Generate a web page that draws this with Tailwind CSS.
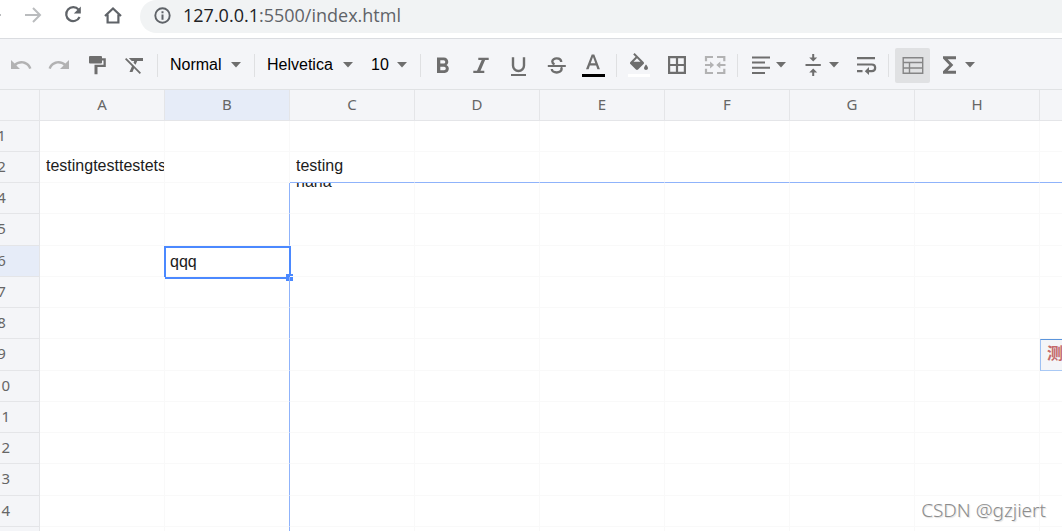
<!DOCTYPE html>
<html lang="en">
<head>
<meta charset="utf-8">
<title>Spreadsheet</title>
<script src="https://cdn.jsdelivr.net/npm/@tailwindcss/browser@4"></script>
</head>
<body class="relative flex h-screen flex-col overflow-hidden bg-white font-['Liberation_Sans',sans-serif] text-base text-black">

<header class="flex h-[39px] shrink-0 items-start border-b border-[#dadce0] bg-white text-[#5f6368]">
  <button aria-label="Back" class="h-8 w-[13px] shrink-0"><svg class="h-8 w-[13px]" viewBox="0 0 13 32"><path d="M-14 15H1" stroke="#babcbe" stroke-width="2"/></svg></button>
  <button aria-label="Forward" class="flex h-[30px] w-[39px] shrink-0 items-center justify-center"><svg class="h-5 w-5" viewBox="0 0 20 20" fill="none" stroke="#babcbe" stroke-width="2"><path d="M2 10h15M10 3l7 7-7 7"/></svg></button>
  <button aria-label="Reload" class="flex h-[30px] w-[41px] shrink-0 items-center justify-center"><svg class="h-5 w-5" viewBox="0 0 20 20"><path d="M15.600 4.600A7 7 0 1 0 16.600 12" fill="none" stroke="currentColor" stroke-width="2.200"/><path d="M17.800 1.500v7h-7z" fill="currentColor"/></svg></button>
  <button aria-label="Home" class="flex h-[30px] w-10 shrink-0 items-center justify-center"><svg class="h-5 w-5" viewBox="0 0 20 20" fill="none" stroke="currentColor" stroke-width="2.200"><path d="M2 11l8-7.600L18 11M4.600 9.500v8h10.800v-8"/></svg></button>
  <label class="ml-[7px] flex h-[33px] min-w-0 flex-1 items-center rounded-bl-full rounded-tl-full bg-[#f1f3f4] pl-[14px] font-['Open_Sans','Noto_Sans',sans-serif] text-[18px] leading-6">
    <svg class="mb-[2px] mr-3 h-[17px] w-[17px] shrink-0" viewBox="0 0 17 17"><circle cx="8.500" cy="8.500" r="7.200" fill="none" stroke="currentColor" stroke-width="1.900"/><path d="M7.500 4.200h2v2h-2zM7.500 7.500h2v5.200h-2z" fill="currentColor"/></svg>
    <a href="#" class="mb-[4px] whitespace-nowrap"><span class="text-[#202124]">127.0.0.1</span>:5500/index.html</a>
  </label>
</header>

<div role="toolbar" aria-label="Formatting" class="flex h-[51px] shrink-0 items-center border-b border-[#e0e2e4] bg-[#f4f5f8] pl-[2px] pt-[2px] text-[#6e6e6e]">
  <button aria-label="Undo" class="flex h-9 w-[38px] shrink-0 items-center justify-center text-[#b2b2b3]"><svg class="h-6 w-6" viewBox="0 0 24 24" fill="currentColor"><path d="M12.500 8c-2.650 0-5.050.99-6.900 2.600L2 7v9h9l-3.620-3.620c1.390-1.160 3.160-1.880 5.120-1.880 3.540 0 6.550 2.310 7.600 5.500l2.370-.78C21.080 11.030 17.150 8 12.500 8z"/></svg></button>
  <button aria-label="Redo" class="flex h-9 w-[38px] shrink-0 items-center justify-center text-[#b2b2b3]"><svg class="h-6 w-6" viewBox="0 0 24 24" fill="currentColor"><path d="M18.400 10.600C16.550 8.990 14.150 8 11.500 8c-4.650 0-8.580 3.030-9.960 7.220L3.900 16c1.050-3.190 4.050-5.500 7.600-5.500 1.950 0 3.730.72 5.120 1.880L13 16h9V7l-3.600 3.600z"/></svg></button>
  <button aria-label="Paint format" class="flex h-9 w-[38px] shrink-0 items-center justify-center"><svg class="h-6 w-6" viewBox="0 0 24 24" fill="currentColor"><path d="M5 3h11a1 1 0 0 1 1 1v1.300h3.800V14h-8.300v7.200h-3v-9.400h9V7.500H17v2a1 1 0 0 1-1 1H5a1 1 0 0 1-1-1V4a1 1 0 0 1 1-1z"/></svg></button>
  <button aria-label="Clear format" class="flex h-9 w-[38px] shrink-0 items-center justify-center"><svg class="h-6 w-6" viewBox="0 0 24 24" fill="currentColor"><path d="M3.270 5L2 6.270l6.970 6.970L6.500 19h3l1.570-3.660L16.730 21 18 19.730 3.550 5.270 3.270 5zM6 5v.18L8.820 8h2.400l-.72 1.680 2.100 2.100L14.210 8H20V5H6z"/></svg></button>
  <div class="mx-[3px] h-[23px] w-px shrink-0 bg-[#dfe0e2]"></div>
  <label class="mx-[9px] flex w-[72px] shrink-0 items-center"><select aria-label="Cell format" class="h-6 w-full appearance-none bg-transparent text-base text-black"><option>Normal</option></select><svg class="pointer-events-none -ml-[11px] mr-px h-[6px] w-[10px] shrink-0" viewBox="0 0 10 6"><path d="M0 0h10L5 5.500z" fill="currentColor"/></svg></label>
  <div class="mx-[3px] h-[23px] w-px shrink-0 bg-[#dfe0e2]"></div>
  <label class="mx-[9px] flex w-[86px] shrink-0 items-center"><select aria-label="Font" class="h-6 w-full appearance-none bg-transparent text-base text-black"><option>Helvetica</option></select><svg class="pointer-events-none -ml-[10px] h-[6px] w-[10px] shrink-0" viewBox="0 0 10 6"><path d="M0 0h10L5 5.500z" fill="currentColor"/></svg></label>
  <label class="mx-[9px] flex w-[37px] shrink-0 items-center"><select aria-label="Font size" class="h-6 w-full appearance-none bg-transparent text-base text-black"><option>10</option></select><svg class="pointer-events-none -ml-[11px] mr-px h-[6px] w-[10px] shrink-0" viewBox="0 0 10 6"><path d="M0 0h10L5 5.500z" fill="currentColor"/></svg></label>
  <div class="mx-[3px] h-[23px] w-px shrink-0 bg-[#dfe0e2]"></div>
  <button aria-label="Bold" class="flex h-9 w-[38px] shrink-0 items-center justify-center"><svg class="h-6 w-6" viewBox="0 0 24 24" fill="currentColor"><path transform="translate(-1.700 .1) scale(1.100)" d="M15.600 10.790c.97-.67 1.650-1.770 1.650-2.790 0-2.260-1.750-4-4-4H7v14h7.040c2.090 0 3.710-1.700 3.710-3.790 0-1.520-.86-2.820-2.150-3.420zM10 6.500h3c.83 0 1.500.67 1.500 1.500s-.67 1.500-1.500 1.500h-3v-3zm3.500 9H10v-3h3.500c.83 0 1.500.67 1.500 1.500s-.67 1.500-1.500 1.500z"/></svg></button>
  <button aria-label="Italic" class="flex h-9 w-[38px] shrink-0 items-center justify-center"><svg class="h-6 w-6" viewBox="0 0 24 24" fill="currentColor"><path d="M9.300 4.700h10.400V7h-3.600l-4.600 10.700h3.800V20H4.300v-2.300H8L12.700 7H9.300z"/></svg></button>
  <button aria-label="Underline" class="flex h-9 w-[38px] shrink-0 items-center justify-center"><svg class="h-6 w-6" viewBox="0 0 24 24" fill="none" stroke="currentColor"><path stroke-width="2.400" d="M6 4.300v8.200a5.500 5.500 0 0 0 11 0V4.300"/><path stroke-width="2" d="M4 22h15"/></svg></button>
  <button aria-label="Strikethrough" class="flex h-9 w-[37px] shrink-0 items-center justify-center"><svg class="h-6 w-6" viewBox="0 0 24 24" fill="none" stroke="currentColor"><path stroke-width="2.400" d="M16.200 9C16.200 4.300 7.300 4.300 7.300 8.500c0 1.400.8 2.200 2.200 2.800M6.800 16c0 4.600 9.800 4.600 9.800 0 0-.7-.2-1.300-.6-1.800"/><path stroke-width="2" d="M2.800 13h18"/></svg></button>
  <button aria-label="Text color" class="flex h-9 w-[38px] shrink-0 items-center justify-center"><svg class="h-6 w-6" viewBox="0 0 24 24"><path fill="currentColor" fill-rule="evenodd" d="M9.700 1.400h2.600l5.600 14.800h-2.500l-1.300-3.700H7.900l-1.300 3.700H4zM8.700 10.300h4.600L11 3.900z"/><path d="M0 21h23v3H0z" fill="#000"/></svg></button>
  <div class="mx-[3px] h-[23px] w-px shrink-0 bg-[#dfe0e2]"></div>
  <button aria-label="Fill color" class="flex h-9 w-[38px] shrink-0 items-center justify-center"><svg class="h-6 w-6" viewBox="0 0 24 24"><path fill="currentColor" d="M16.560 8.940L7.620 0 6.210 1.410l2.380 2.380-5.150 5.150c-.59.59-.59 1.540 0 2.120l5.500 5.500c.29.29.68.44 1.060.44s.77-.15 1.060-.44l5.500-5.500c.59-.58.59-1.530 0-2.120zM6.500 8.700L10 5.210 13.500 8.700zM19 11.500s-2 2.170-2 3.500c0 1.100.9 2 2 2s2-.9 2-2c0-1.330-2-3.500-2-3.500z"/><path d="M1 21h22v3H1z" fill="#fff"/></svg></button>
  <button aria-label="Borders" class="flex h-9 w-[38px] shrink-0 items-center justify-center"><svg class="h-6 w-6" viewBox="0 0 24 24" fill="none" stroke="currentColor" stroke-width="2.200"><path d="M4.100 4.100h15.800v15.800H4.100zM12 4v16M4 12h16"/></svg></button>
  <button aria-label="Merge cells" class="flex h-9 w-[38px] shrink-0 items-center justify-center text-[#b2b2b3]"><svg class="h-6 w-6" viewBox="0 0 24 24"><path fill="none" stroke="currentColor" stroke-width="2.200" d="M3 8.200V4h7M14 4h7.300v4.200M3 15.800V20h7M14 20h7.300v-4.200M2 12H8M22.500 12h-7"/><path fill="currentColor" d="M7.100 8.500l4 3.500-4 3.500zM17.300 8.500l-4 3.500 4 3.500z"/></svg></button>
  <div class="mx-[3px] h-[23px] w-px shrink-0 bg-[#dfe0e2]"></div>
  <button aria-label="Horizontal align" aria-haspopup="menu" class="flex h-9 w-[53px] shrink-0 items-center gap-[6px] pl-[9px]"><svg class="h-6 w-5" viewBox="2 0 20 24" stroke="currentColor" stroke-width="2"><path d="M4 4.500h18M4 9.500h13M4 14.700h18M4 20h13"/></svg><svg class="h-[6px] w-[10px]" viewBox="0 0 10 6"><path d="M0 0h10L5 5.500z" fill="currentColor"/></svg></button>
  <button aria-label="Vertical align" aria-haspopup="menu" class="flex h-9 w-[53px] shrink-0 items-center gap-[6px] pl-[9px]"><svg class="h-6 w-5" viewBox="2 0 20 24" fill="currentColor"><path d="M4.500 11h15.300v2H4.500zM11.200 1h2v3.500h3l-4 4-4-4h3zM11.200 23h2v-3.500h3l-4-4-4 4h3z"/></svg><svg class="h-[6px] w-[10px]" viewBox="0 0 10 6"><path d="M0 0h10L5 5.500z" fill="currentColor"/></svg></button>
  <button aria-label="Wrap text" class="flex h-9 w-[38px] shrink-0 items-center justify-center"><svg class="h-6 w-6" viewBox="0 0 24 24"><path fill="none" stroke="currentColor" stroke-width="2.200" d="M3 5.200h18M3 11.500h14.800c4.500 0 4.500 6.700 0 6.700H14M3 18.200h5.500"/><path fill="currentColor" d="M15 14v8l-4.200-3.800z"/></svg></button>
  <div class="mx-[3px] h-[23px] w-px shrink-0 bg-[#dfe0e2]"></div>
  <button aria-label="Freeze cells" aria-pressed="true" class="ml-[3px] flex h-[35px] w-[35px] shrink-0 items-center justify-center rounded-[2px] bg-[#e0e1e3]"><svg class="h-6 w-6" viewBox="0 0 24 24" fill="none" stroke="#858586" stroke-width="1.400"><path d="M2.200 4.700h19.500v15.600H2.200zM2.200 9.500h19.500M2.200 15h19.500M8.500 9.500v10.800"/></svg></button>
  <button aria-label="Functions" aria-haspopup="menu" class="flex h-9 w-[53px] shrink-0 items-center gap-[6px] pl-[9px]"><svg class="h-6 w-5" viewBox="2 0 20 24" fill="currentColor"><path d="M19 3.200H6v2.400l6.300 6.400L6 18.300v2.500h13v-3h-8.300L16.300 12l-5.600-5.800H19z"/></svg><svg class="h-[6px] w-[10px]" viewBox="0 0 10 6"><path d="M0 0h10L5 5.500z" fill="currentColor"/></svg></button>
</div>

<main class="min-h-0 flex-1 overflow-hidden">
  <table class="-ml-9 w-[1201px] table-fixed border-separate border-spacing-0">
    <thead><tr id="head" class="h-[31px]"></tr></thead>
    <tbody id="rows"></tbody>
  </table>
</main>

<div class="absolute bottom-[7px] right-4 font-['Noto_Sans',sans-serif] text-[19px] leading-7 font-light text-[#8c8c8c] [text-shadow:1px_1px_1px_#ddd]">CSDN @gzjiert</div>

<script>
const columns = ['', 'A', 'B', 'C', 'D', 'E', 'F', 'G', 'H', 'I'];
const selected = { col: 'B', row: 6 };
const values = { A2: 'testingtesttestets', C2: 'testing', C4: 'haha', B6: 'qqq', I9: '测试' };

const head = document.getElementById('head');
for (const name of columns) {
  const th = document.createElement('th');
  th.scope = 'col';
  th.textContent = name;
  th.className = "border-b border-r border-[#e4e5e8] p-0 pb-[3px] text-center font-['Noto_Sans',sans-serif] text-[15px] leading-5 font-normal text-[#666] " +
    (name === '' ? 'w-[76px] ' : 'w-[125px] ') +
    (name === selected.col ? 'bg-[#e6ecf8]' : 'bg-[#f4f5f8]');
  head.append(th);
}

// Row 3 is scrolled out of view beneath the frozen rows.
const body = document.getElementById('rows');
for (const n of [1, 2, 4, 5, 6, 7, 8, 9, 10, 11, 12, 13, 14, 15]) {
  const tr = document.createElement('tr');
  tr.className = n > 4 && n % 4 === 1 ? 'h-8' : 'h-[31px]';
  const th = document.createElement('th');
  th.scope = 'row';
  th.textContent = n;
  th.className = "border-b border-r border-[#e4e5e8] p-0 pb-[3px] text-center font-['Noto_Sans',sans-serif] text-[15px] leading-5 font-normal text-[#666] " +
    (n === selected.row ? 'bg-[#e6ecf8]' : 'bg-[#f4f5f8]');
  tr.append(th);
  for (const c of columns.slice(1)) {
    const td = document.createElement('td');
    const key = c + n;
    let cls = 'relative border-b border-r p-0 pb-[2px] pl-[6px] ';
    if (key === 'I9') {
      cls += "border-l border-t border-l-[#9dc0f3] border-t-[#5b95dc] border-b-[#a9c9f5] border-r-[#9dc0f3] bg-[#f4f5f8] align-middle font-['Liberation_Sans','Noto_Sans_CJK_SC',sans-serif] font-bold text-[#c46a6a] ";
    } else {
      cls += n === 2 && c > 'B' ? 'border-b-[#8fb3fb] ' : 'border-b-[#f9f9f9] ';
      cls += n >= 4 && c === 'B' ? 'border-r-[#8fb3fb] ' : 'border-r-[#f9f9f9] ';
      cls += 'text-[#1c1c1c] ';
      cls += key === 'C4' ? 'align-top' : 'align-middle';
    }
    td.className = cls;
    if (values[key]) {
      const text = document.createElement('div');
      text.textContent = values[key];
      text.className = key === 'C4'
        ? 'flex h-2 items-end overflow-hidden whitespace-nowrap leading-[18px]'
        : 'overflow-hidden whitespace-nowrap leading-5';
      td.append(text);
    }
    if (c === selected.col && n === selected.row) {
      td.className = 'relative border-b border-r border-b-[#f9f9f9] border-r-[#8fb3fb] p-0 pt-[2px] pl-[5px] align-middle text-[#1c1c1c]';
      const box = document.createElement('div');
      box.className = 'pointer-events-none absolute -left-px top-0 -right-[2px] -bottom-[3px] border-2 border-[#4b89ff]';
      const handle = document.createElement('div');
      handle.className = 'absolute -right-1 -bottom-1 h-[7px] w-[7px] bg-[#4b89ff]';
      box.append(handle);
      td.append(box);
    }
    tr.append(td);
  }
  body.append(tr);
}
</script>
</body>
</html>
